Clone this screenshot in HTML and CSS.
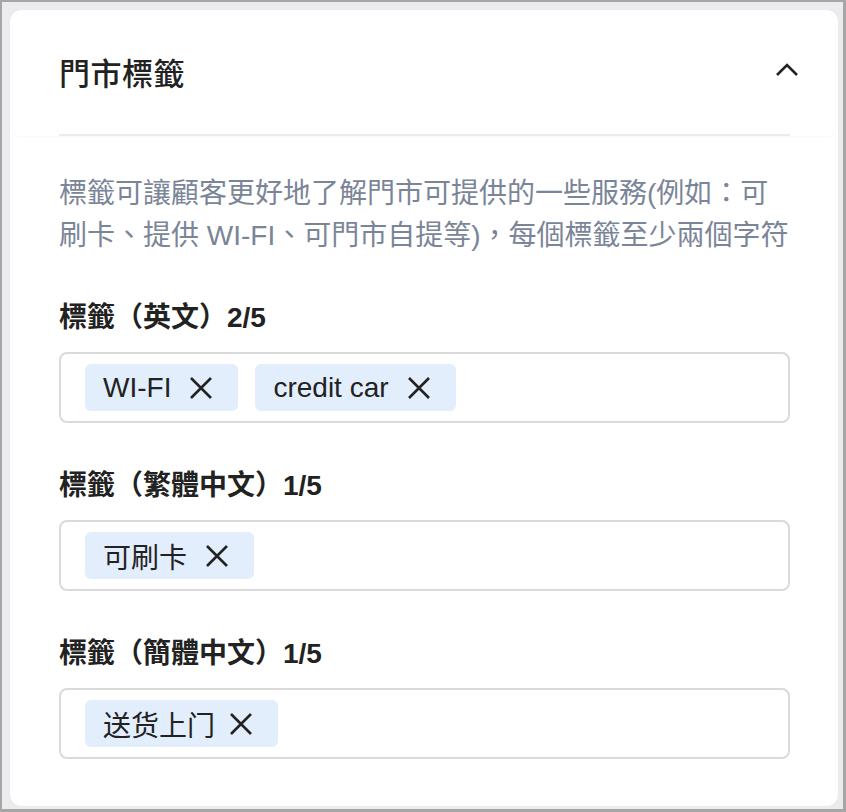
FILE: index.html
```html
<!DOCTYPE html>
<html lang="zh-Hant">
<head>
    <meta charset="UTF-8">
    <meta name="viewport" content="width=device-width, initial-scale=1.0">
    <title>門市標籤</title>
    <link rel="stylesheet" href="styles.css">
</head>
<body>
    <div class="frame">
        <div class="card">
            <div class="card-header">
                <div class="header-inner">
                    <h1>門市標籤</h1>
                    <svg class="chevron" width="24" height="16" viewBox="0 0 24 16">
                        <path d="M2 13 L12 3 L22 13" fill="none" stroke="#222" stroke-width="2.6"/>
                    </svg>
                </div>
            </div>

            <div class="card-body">
                <p class="desc">標籤可讓顧客更好地了解門市可提供的一些服務(例如：可<br>刷卡、提供 WI-FI、可門市自提等)，每個標籤至少兩個字符</p>

                <div class="field">
                    <div class="field-label">標籤（英文）2/5</div>
                    <div class="tag-input">
                        <span class="tag">WI-FI
                            <svg class="tag-x" width="24" height="24" viewBox="0 0 24 24"><path d="M2 2 L22 22 M22 2 L2 22" stroke="#222" stroke-width="2.6"/></svg>
                        </span>
                        <span class="tag">credit car
                            <svg class="tag-x" width="24" height="24" viewBox="0 0 24 24"><path d="M2 2 L22 22 M22 2 L2 22" stroke="#222" stroke-width="2.6"/></svg>
                        </span>
                    </div>
                </div>

                <div class="field">
                    <div class="field-label">標籤（繁體中文）1/5</div>
                    <div class="tag-input">
                        <span class="tag">可刷卡
                            <svg class="tag-x" width="24" height="24" viewBox="0 0 24 24"><path d="M2 2 L22 22 M22 2 L2 22" stroke="#222" stroke-width="2.6"/></svg>
                        </span>
                    </div>
                </div>

                <div class="field">
                    <div class="field-label">標籤（簡體中文）1/5</div>
                    <div class="tag-input">
                        <span class="tag" lang="zh-Hans">送货上门
                            <svg class="tag-x" width="24" height="24" viewBox="0 0 24 24"><path d="M2 2 L22 22 M22 2 L2 22" stroke="#222" stroke-width="2.6"/></svg>
                        </span>
                    </div>
                </div>
            </div>
        </div>
    </div>
</body>
</html>
```

FILE: styles.css
```css
* {
    box-sizing: border-box;
}
html, body {
    margin: 0;
    padding: 0;
}
body {
    font-family: "Liberation Sans", "Noto Sans CJK TC", sans-serif;
    color: #222;
    background: #ececee;
}
.frame {
    height: 812px;
    border: solid #a6a6a6;
    border-width: 2px 3px 3px 2px;
    padding: 8px 5px 3px 8px;
    background: #ececee;
}
.card {
    height: 796px;
    background: #fff;
    border-radius: 12px;
    overflow: hidden;
}
.card-header {
    padding: 0 48px 0 49px;
    border-radius: 12px;
    box-shadow: 0 1px 3px rgba(0, 0, 0, 0.03);
}
.header-inner {
    height: 126px;
    display: flex;
    align-items: center;
    justify-content: space-between;
    border-bottom: 2px solid #ebebeb;
    padding-bottom: 2px;
}
.header-inner h1 {
    margin: 0;
    font-size: 31px;
    font-weight: 500;
    color: #222;
    letter-spacing: 0.5px;
}
.chevron {
    margin-right: -9px;
    margin-bottom: 2px;
}
.card-body {
    padding: 0 48px 0 49px;
}
.desc {
    margin: 37px 0 40px;
    font-size: 28px;
    line-height: 42px;
    white-space: nowrap;
    color: #7b8598;
}
.field + .field {
    margin-top: 42px;
}
.field-label {
    font-size: 28px;
    line-height: 42px;
    font-weight: 700;
    margin-bottom: 13px;
}
.tag-input {
    height: 71px;
    border: 2px solid #dadada;
    border-radius: 8px;
    padding: 10px 24px;
    display: flex;
    gap: 17px;
}
.tag {
    height: 47px;
    display: inline-flex;
    align-items: center;
    gap: 18px;
    padding: 0 25px 0 18px;
    background: #e3eefc;
    border-radius: 6px;
    font-size: 28px;
    color: #222;
}
.tag[lang="zh-Hans"] {
    font-family: "Liberation Sans", "Noto Sans CJK SC", sans-serif;
    gap: 14px;
}
.tag-x {
    display: block;
}
```
